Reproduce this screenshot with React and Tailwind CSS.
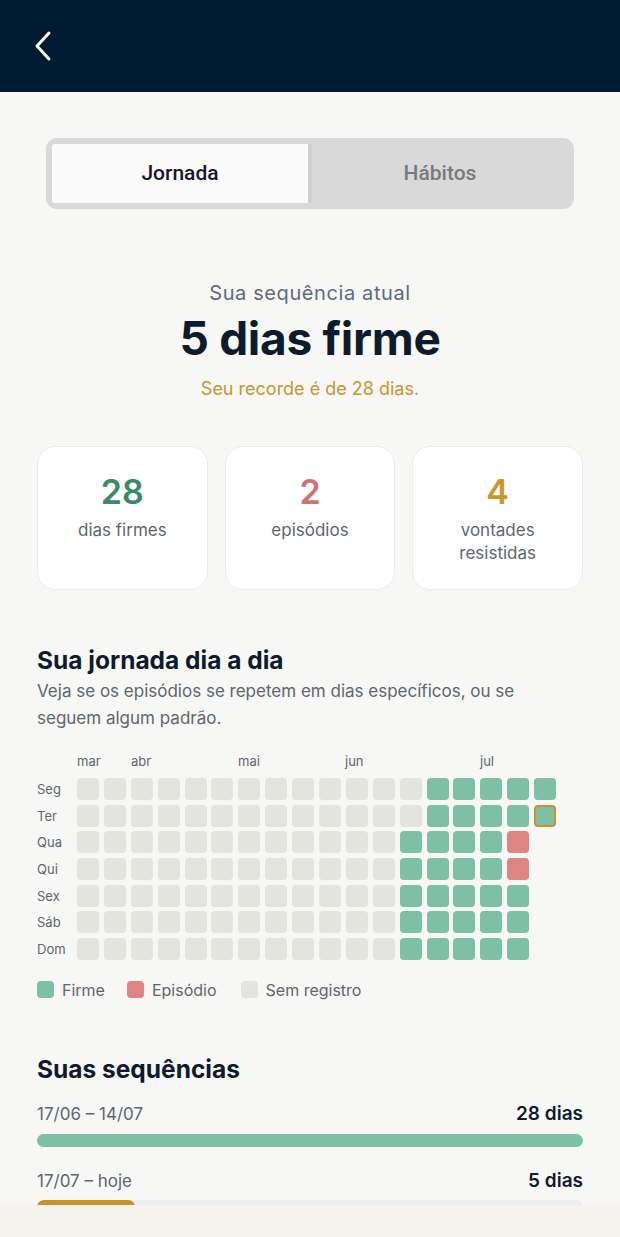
import React from "react";

const GREEN = "bg-[#7dc0a4]";
const RED = "bg-[#e08383]";
const GRAY = "bg-[#e4e4df]";

const days = ["Seg", "Ter", "Qua", "Qui", "Sex", "Sáb", "Dom"];

function rowCells(r) {
  const cells = [];
  for (let c = 0; c < 18; c++) {
    let kind = "gray";
    if (r < 2) {
      kind = c >= 13 ? "green" : "gray";
      if (r === 1 && c === 17) kind = "today";
    } else {
      if (c === 17) kind = "none";
      else if (c >= 12) kind = "green";
      if ((r === 2 || r === 3) && c === 16) kind = "red";
    }
    cells.push(kind);
  }
  return cells;
}

function Cell({ kind }) {
  if (kind === "none") return <div className="w-[22px] h-[22px]" />;
  if (kind === "today")
    return <div className="w-[22px] h-[22px] rounded-[4px] bg-[#7dc0a4] border-2 border-[#c8922e]" />;
  const cls = kind === "green" ? GREEN : kind === "red" ? RED : GRAY;
  return <div className={`w-[22px] h-[22px] rounded-[4px] ${cls}`} />;
}

export default function App() {
  const body = { fontFamily: "Inter, 'Noto Sans', sans-serif" };
  return (
    <div className="w-[620px] h-[1237px] flex flex-col overflow-hidden bg-[#f7f7f5]" style={body}>
      <header className="h-[92px] shrink-0 bg-[#011a33] flex items-center pl-[33px]">
        <svg width="20" height="32" viewBox="0 0 20 32" fill="none">
          <path d="M16 3 L4 16 L16 29" stroke="white" strokeWidth="3" strokeLinecap="round" strokeLinejoin="round" />
        </svg>
      </header>

      <main className="flex-1 overflow-hidden px-[37px]">
        <div className="pt-[46px] px-[9px]">
          <div className="h-[71px] rounded-[11px] bg-[#d9d9d9] p-[6px] flex">
            <div
              className="flex-1 bg-[#fafafa] rounded-l-[3px] flex items-center justify-center text-[21px] font-medium text-[#111827]"
              style={{ fontFamily: "Roboto, sans-serif" }}
            >
              Jornada
            </div>
            <div className="w-[4px] bg-[#cfcfcf]" />
            <div
              className="flex-1 flex items-center justify-center text-[21px] font-medium text-[#7a7a7a]"
              style={{ fontFamily: "Roboto, sans-serif" }}
            >
              Hábitos
            </div>
          </div>
        </div>

        <div className="mt-[71px] flex flex-col items-center">
          <div className="text-[20px] leading-[26px] tracking-[0.6px] text-[#5f6b7a]">Sua sequência atual</div>
          <div className="mt-[6px] text-[46px] leading-[52px] font-bold text-[#0d1b2e] tracking-[-0.3px]">5 dias firme</div>
          <div className="mt-[13px] text-[18px] leading-[24px] text-[#c9952e]">Seu recorde é de 28 dias.</div>
        </div>

        <div className="mt-[45px] grid grid-cols-3 gap-[17px]">
          {[
            ["28", "text-[#3a8a66]", "dias firmes"],
            ["2", "text-[#d27272]", "episódios"],
            ["4", "text-[#c9962f]", "vontades resistidas"],
          ].map(([n, c, l]) => (
            <div key={n} className="h-[144px] bg-white border border-[#ebebe9] rounded-[18px] flex flex-col items-center pt-[25px] px-[20px]">
              <div className={`text-[34px] leading-[40px] font-semibold ${c}`}>{n}</div>
              <div className="mt-[7px] text-[17px] leading-[23px] text-[#5e6670] text-center">{l}</div>
            </div>
          ))}
        </div>

        <h2 className="mt-[55px] text-[24.5px] leading-[30px] font-bold text-[#0d1b2e]">Sua jornada dia a dia</h2>
        <p className="mt-[3px] text-[17px] leading-[27px] text-[#5e6670] pr-[50px]">
          Veja se os episódios se repetem em dias específicos, ou se seguem algum padrão.
        </p>

        <div className="mt-[20px]">
          <div className="flex h-[18px] text-[13px] leading-[18px] text-[#5e6670]">
            <div className="w-[40px] shrink-0" />
            <div className="relative flex-1">
              <span className="absolute left-[0px]">mar</span>
              <span className="absolute left-[54px]">abr</span>
              <span className="absolute left-[161px]">mai</span>
              <span className="absolute left-[268px]">jun</span>
              <span className="absolute left-[403px]">jul</span>
            </div>
          </div>
          <div className="mt-[8px] flex flex-col gap-[4.67px]">
            {days.map((d, r) => (
              <div key={d} className="flex items-center">
                <div className="w-[40px] shrink-0 text-[13px] leading-[22px] text-[#5e6670]">{d}</div>
                <div className="flex gap-[4.9px]">
                  {rowCells(r).map((k, i) => (
                    <Cell key={i} kind={k} />
                  ))}
                </div>
              </div>
            ))}
          </div>
        </div>

        <div className="mt-[19px] flex items-center text-[16px] leading-[22px] text-[#5e6670]">
          <div className="w-[17px] h-[17px] rounded-[4px] bg-[#7dc0a4]" />
          <span className="ml-[8px]">Firme</span>
          <div className="ml-[22px] w-[17px] h-[17px] rounded-[4px] bg-[#e08383]" />
          <span className="ml-[8px]">Episódio</span>
          <div className="ml-[24px] w-[17px] h-[17px] rounded-[4px] bg-[#e4e4df]" />
          <span className="ml-[8px]">Sem registro</span>
        </div>

        <h2 className="mt-[53px] text-[24.5px] leading-[30px] font-bold text-[#0d1b2e]">Suas sequências</h2>

        <div className="mt-[18px] flex justify-between items-center">
          <span className="text-[17px] leading-[24px] text-[#5e6670]">17/06 – 14/07</span>
          <span className="text-[19px] leading-[24px] font-semibold text-[#0d1b2e]">28 dias</span>
        </div>
        <div className="mt-[8px] h-[13px] rounded-full bg-[#7dc0a4]" />

        <div className="mt-[22px] flex justify-between items-center">
          <span className="text-[17px] leading-[24px] text-[#5e6670]">17/07 – hoje</span>
          <span className="text-[19px] leading-[24px] font-semibold text-[#0d1b2e]">5 dias</span>
        </div>
        <div className="mt-[7px] h-[13px] rounded-full bg-[#eceeef] overflow-hidden">
          <div className="h-full rounded-full bg-[#c8922e]" style={{ width: `${(5 / 28) * 100}%` }} />
        </div>
      </main>

      <div className="h-[32px] shrink-0 bg-[#f6f3ef]" />
    </div>
  );
}
